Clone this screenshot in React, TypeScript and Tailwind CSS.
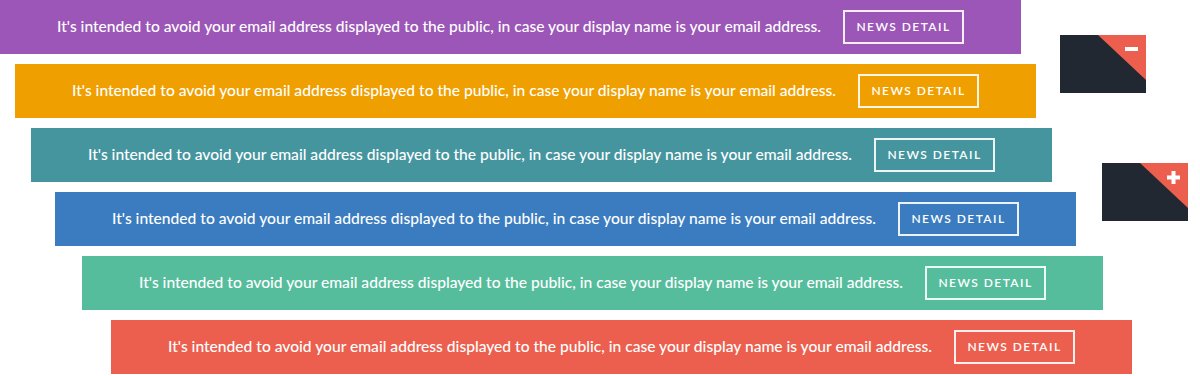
import React from 'react';

const bars = [
  { bg: 'bg-[#9b56b7]', indent: 'ml-0' },
  { bg: 'bg-[#f09f00]', indent: 'ml-[15px]' },
  { bg: 'bg-[#45959f]', indent: 'ml-[31px]' },
  { bg: 'bg-[#3a7cbf]', indent: 'ml-[55px]' },
  { bg: 'bg-[#56bd9c]', indent: 'ml-[82px]' },
  { bg: 'bg-[#ec5f4e]', indent: 'ml-[111px]' },
];

const message =
  "It's intended to avoid your email address displayed to the public, in case your display name is your email address.";

const ToggleBox: React.FC<{ sign: 'minus' | 'plus' }> = ({ sign }) => (
  <div className="relative w-[86px] h-[58px] bg-[#222831]">
    {/* red folded corner */}
    <svg className="absolute inset-0" width="86" height="58" viewBox="0 0 86 58">
      <polygon points="38,0 86,0 86,45" fill="#ec5f4e" />
      {sign === 'minus' ? (
        <rect x="65" y="12" width="13" height="4" fill="#fff" />
      ) : (
        <>
          <rect x="65" y="12.5" width="13" height="4" fill="#fff" />
          <rect x="69.5" y="8" width="4" height="13" fill="#fff" />
        </>
      )}
    </svg>
  </div>
);

export default function App() {
  return (
    <div className="w-[1200px] h-[376px] bg-white flex overflow-hidden font-['Lato','Liberation_Sans',sans-serif]">
      {/* Stacked news bars */}
      <div className="flex flex-col gap-[10px] shrink-0">
        {bars.map((b, i) => (
          <div
            key={i}
            className={`${b.bg} ${b.indent} w-[1021px] h-[54px] flex items-center justify-center gap-[22px] text-white`}
          >
            <span className="text-[15.6px] font-medium whitespace-nowrap">{message}</span>
            <button className="w-[121px] h-[34px] border-2 border-white/90 text-[12px] font-semibold tracking-[0.12em] uppercase flex items-center justify-center">
              News Detail
            </button>
          </div>
        ))}
      </div>

      {/* Collapse / expand toggles */}
      <div className="flex flex-col pt-[35px] gap-[70px]">
        <div className="ml-[-72px]">
          <ToggleBox sign="minus" />
        </div>
        <div className="ml-[-30px]">
          <ToggleBox sign="plus" />
        </div>
      </div>
    </div>
  );
}
